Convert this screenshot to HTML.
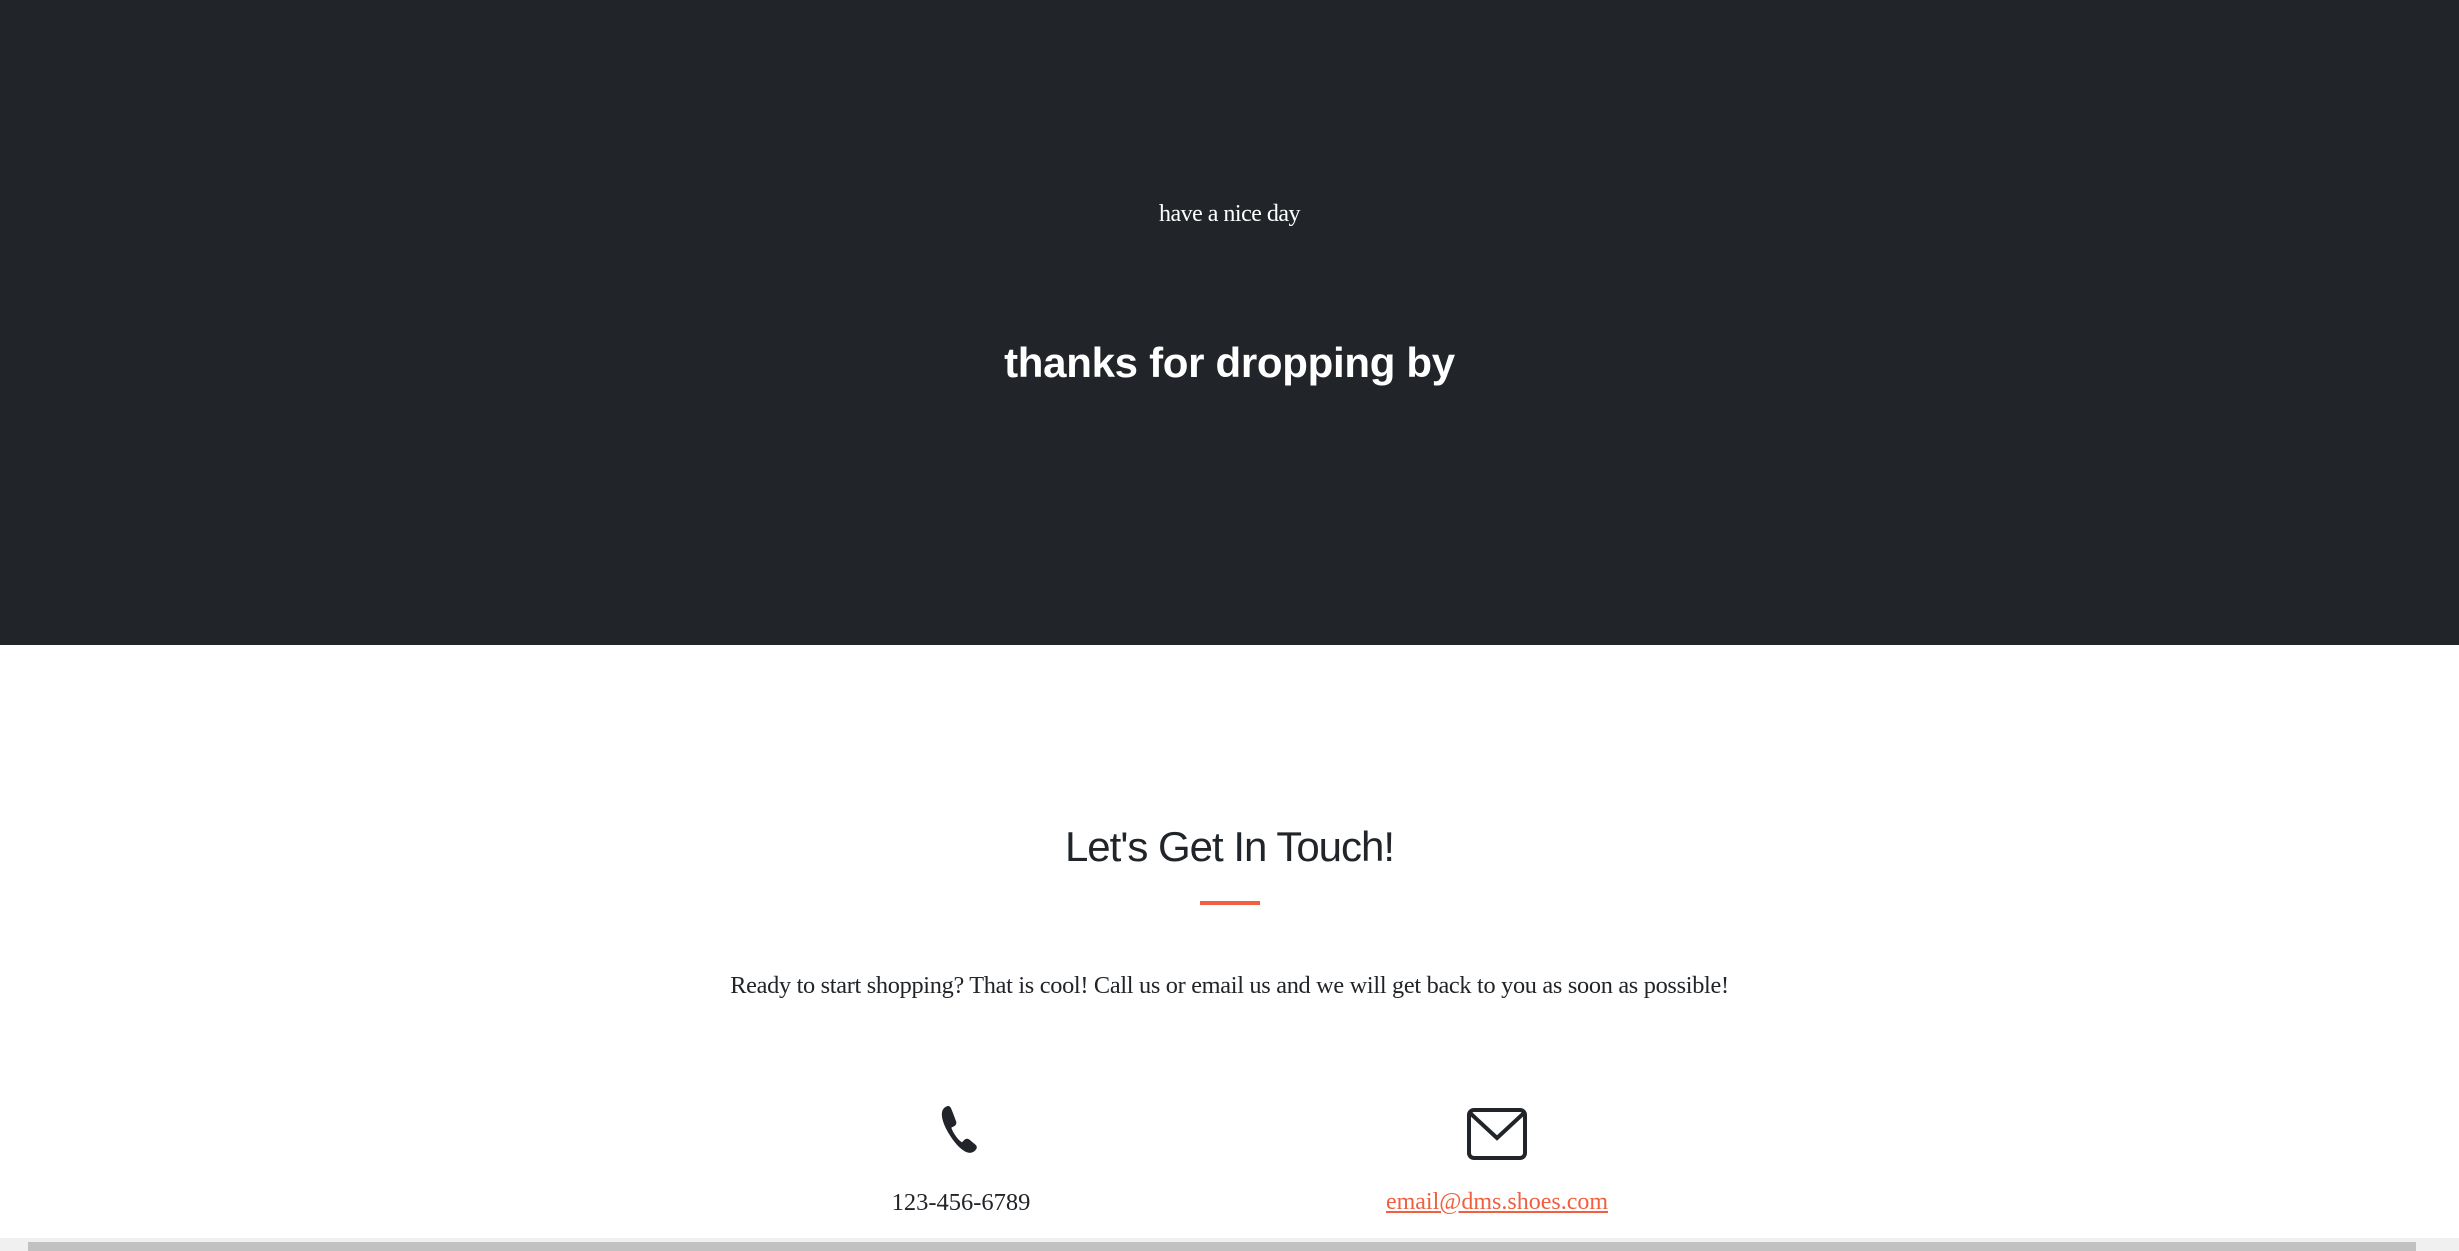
<!DOCTYPE html>
<html><head><meta charset="utf-8"><style>
*{margin:0;padding:0;box-sizing:border-box}
html,body{width:2459px;height:1251px;overflow:hidden;background:#fff}
.dark{position:absolute;left:0;top:0;width:2459px;height:645px;background:#212429}
.t{position:absolute;left:0;width:2459px;text-align:center}
.serif{font-family:"Liberation Serif",serif}
.sans{font-family:"Liberation Sans",sans-serif}
</style></head><body>
<div class="dark"></div>
<div class="t serif" style="top:201px;font-size:24px;color:#fff;letter-spacing:-0.5px">have a nice day</div>
<div class="t sans" style="top:339px;font-size:42px;font-weight:bold;color:#fff;letter-spacing:-0.3px">thanks for dropping by</div>
<div class="t sans" style="top:823px;font-size:42px;color:#212529;letter-spacing:-1px">Let's Get In Touch!</div>
<div style="position:absolute;left:1200px;top:901px;width:60px;height:4px;background:#f05f40"></div>
<div class="t serif" style="top:972px;font-size:24.3px;color:#212529;letter-spacing:-0.3px">Ready to start shopping? That is cool! Call us or email us and we will get back to you as soon as possible!</div>
<svg style="position:absolute;left:937px;top:1104px" width="50" height="50" viewBox="0 0 512 512"><path fill="#212529" d="M120 20c-20 0-40 10-55 30-30 40-20 130 60 260 80 130 160 190 210 190 30 0 50-15 65-35 12-16 10-35-8-50l-60-50c-18-15-40-12-55 5l-20 22c-40-20-95-100-110-150l28-14c20-10 28-32 20-52l-30-80c-8-20-25-76-45-76z"/></svg>
<svg style="position:absolute;left:1467px;top:1108px" width="60" height="52" viewBox="0 0 60 52"><rect x="2" y="2" width="56" height="48" rx="5" fill="none" stroke="#212529" stroke-width="4"/><path d="M3 5 L30 30 L57 5" fill="none" stroke="#212529" stroke-width="4"/></svg>
<div class="serif" style="position:absolute;left:861px;width:200px;text-align:center;top:1189px;font-size:24.5px;color:#212529">123-456-6789</div>
<div class="serif" style="position:absolute;left:1347px;width:300px;text-align:center;top:1189px;font-size:24px;color:#f05f40;text-decoration:underline">email@dms.shoes.com</div>
<div style="position:absolute;left:0;top:1238px;width:2459px;height:13px;background:#f0f0f0"></div>
<div style="position:absolute;left:28px;top:1242px;width:2388px;height:9px;background:#c1c1c1"></div>
</body></html>
